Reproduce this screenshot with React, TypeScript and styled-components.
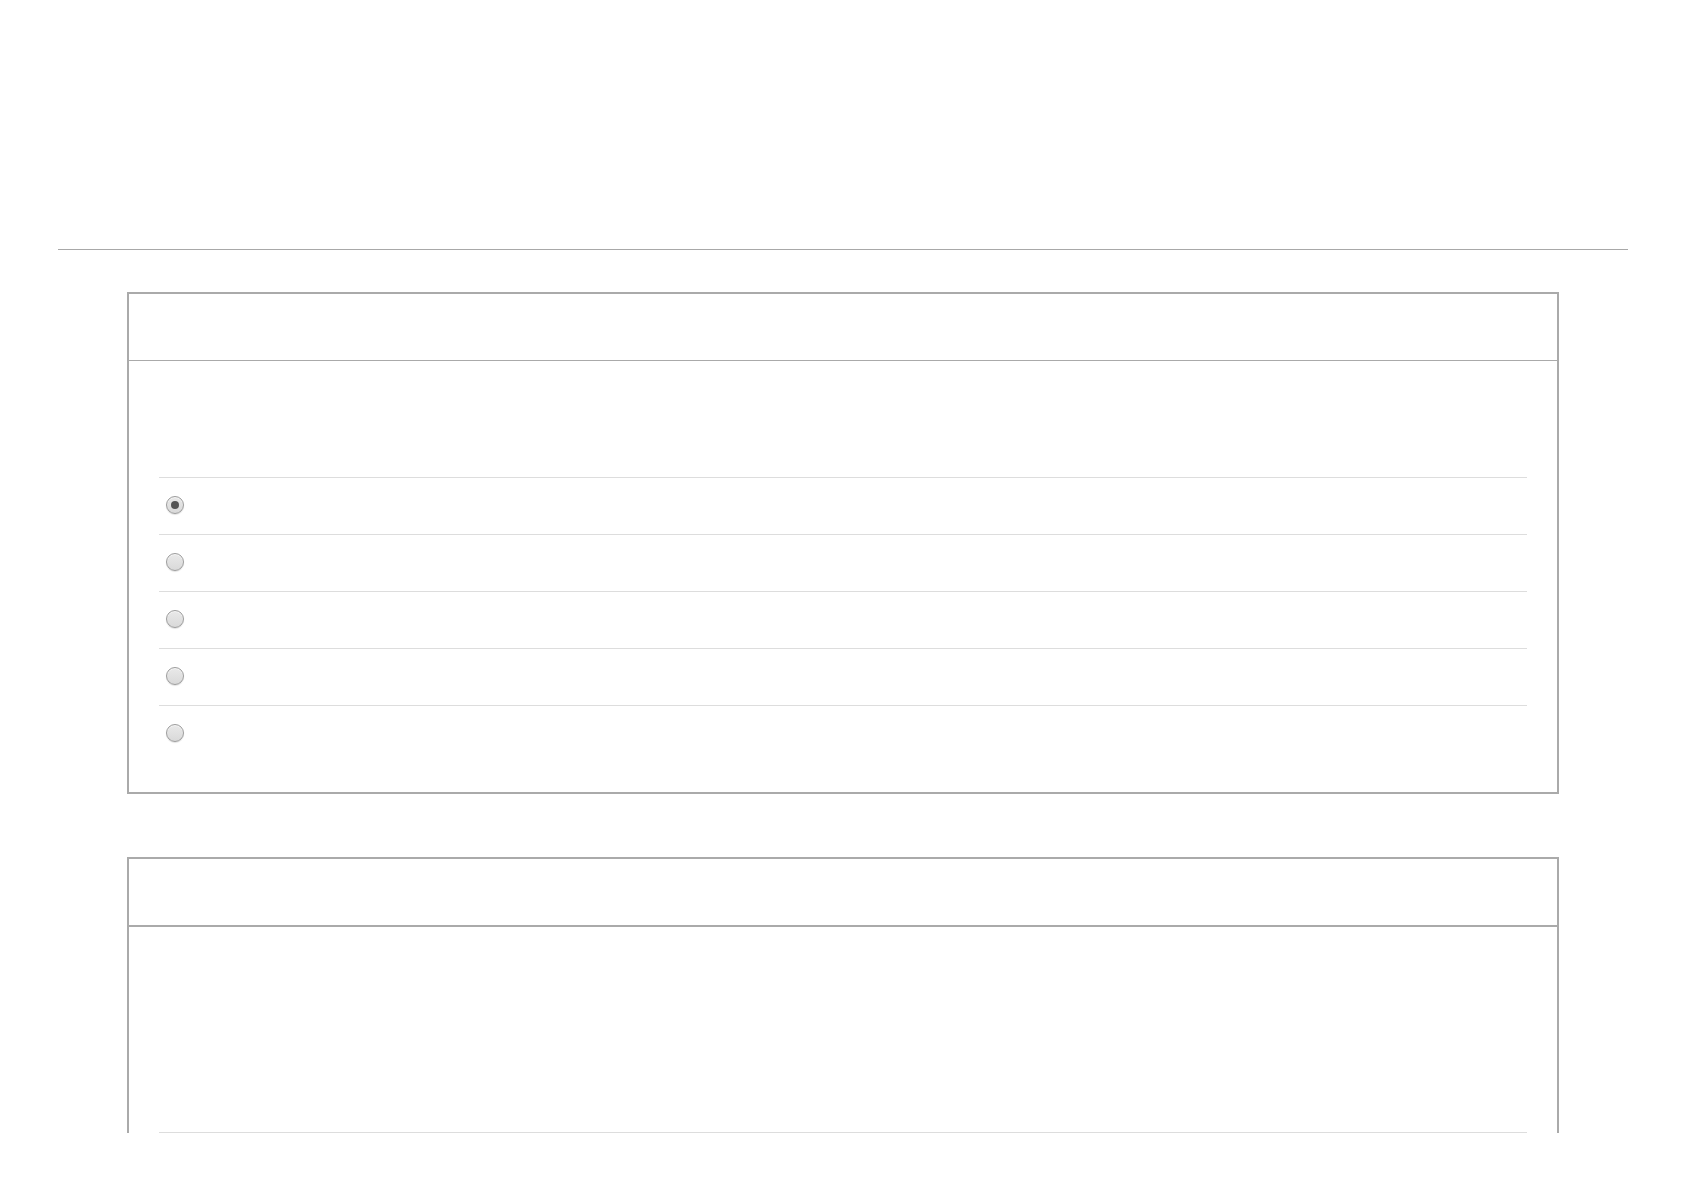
import React from "react";
import styled, { createGlobalStyle } from "styled-components";

const Global = createGlobalStyle`
  html, body { margin: 0; padding: 0; background: #ffffff; }
  body { font-family: "Liberation Sans", Arial, sans-serif; }
`;

const Page = styled.div`
  width: 1684px;
  height: 1133px;
  overflow: hidden;
  padding-top: 249px;
  box-sizing: border-box;
  display: flex;
  flex-direction: column;
`;

const Divider = styled.div`
  flex-shrink: 0;
  margin: 0 56px 0 58px;
  height: 1px;
  background: #a8a8a8;
`;

const Stack = styled.div`
  flex-shrink: 0;
  display: flex;
  flex-direction: column;
  gap: 63px;
  margin-top: 42px;
  padding-left: 127px;
`;

const Panel = styled.section`
  flex-shrink: 0;
  width: 1432px;
  box-sizing: border-box;
  border: 2px solid #aaaaaa;
  background: #fff;
  display: flex;
  flex-direction: column;
`;

const PanelHeader = styled.header<{ $thick?: boolean }>`
  flex-shrink: 0;
  height: 66px;
  border-bottom: ${(p) => (p.$thick ? 2 : 1)}px solid #aaaaaa;
`;

const PanelBody = styled.div<{ $lead: number }>`
  padding: ${(p) => p.$lead}px 30px 30px 30px;
  display: flex;
  flex-direction: column;
`;

const OptionRow = styled.label`
  flex-shrink: 0;
  display: flex;
  align-items: flex-start;
  height: 57px;
  box-sizing: border-box;
  border-top: 1px solid #dddddd;
  padding: 18px 0 0 7px;
`;

const Radio = styled.span<{ $checked?: boolean }>`
  width: 18px;
  height: 18px;
  box-sizing: border-box;
  border-radius: 50%;
  border: 1px solid #9c9c9c;
  background: linear-gradient(#e9e9e9, #d9d9d9);
  box-shadow: 0 1px 1px rgba(0, 0, 0, 0.12), inset 0 1px 0 #f6f6f6;
  display: flex;
  align-items: center;
  justify-content: center;
  &::after {
    content: "";
    width: 8px;
    height: 8px;
    border-radius: 50%;
    background: #555555;
    display: ${(p) => (p.$checked ? "block" : "none")};
  }
`;

const options = [true, false, false, false, false];

export default function App() {
  return (
    <>
      <Global />
      <Page>
        <Divider />
        <Stack>
          <Panel>
            <PanelHeader />
            <PanelBody $lead={116}>
              {options.map((checked, i) => (
                <OptionRow key={i}>
                  <Radio $checked={checked} />
                </OptionRow>
              ))}
            </PanelBody>
          </Panel>
          <Panel>
            <PanelHeader $thick />
            <PanelBody $lead={205}>
              <OptionRow>
                <Radio />
              </OptionRow>
            </PanelBody>
          </Panel>
        </Stack>
      </Page>
    </>
  );
}
